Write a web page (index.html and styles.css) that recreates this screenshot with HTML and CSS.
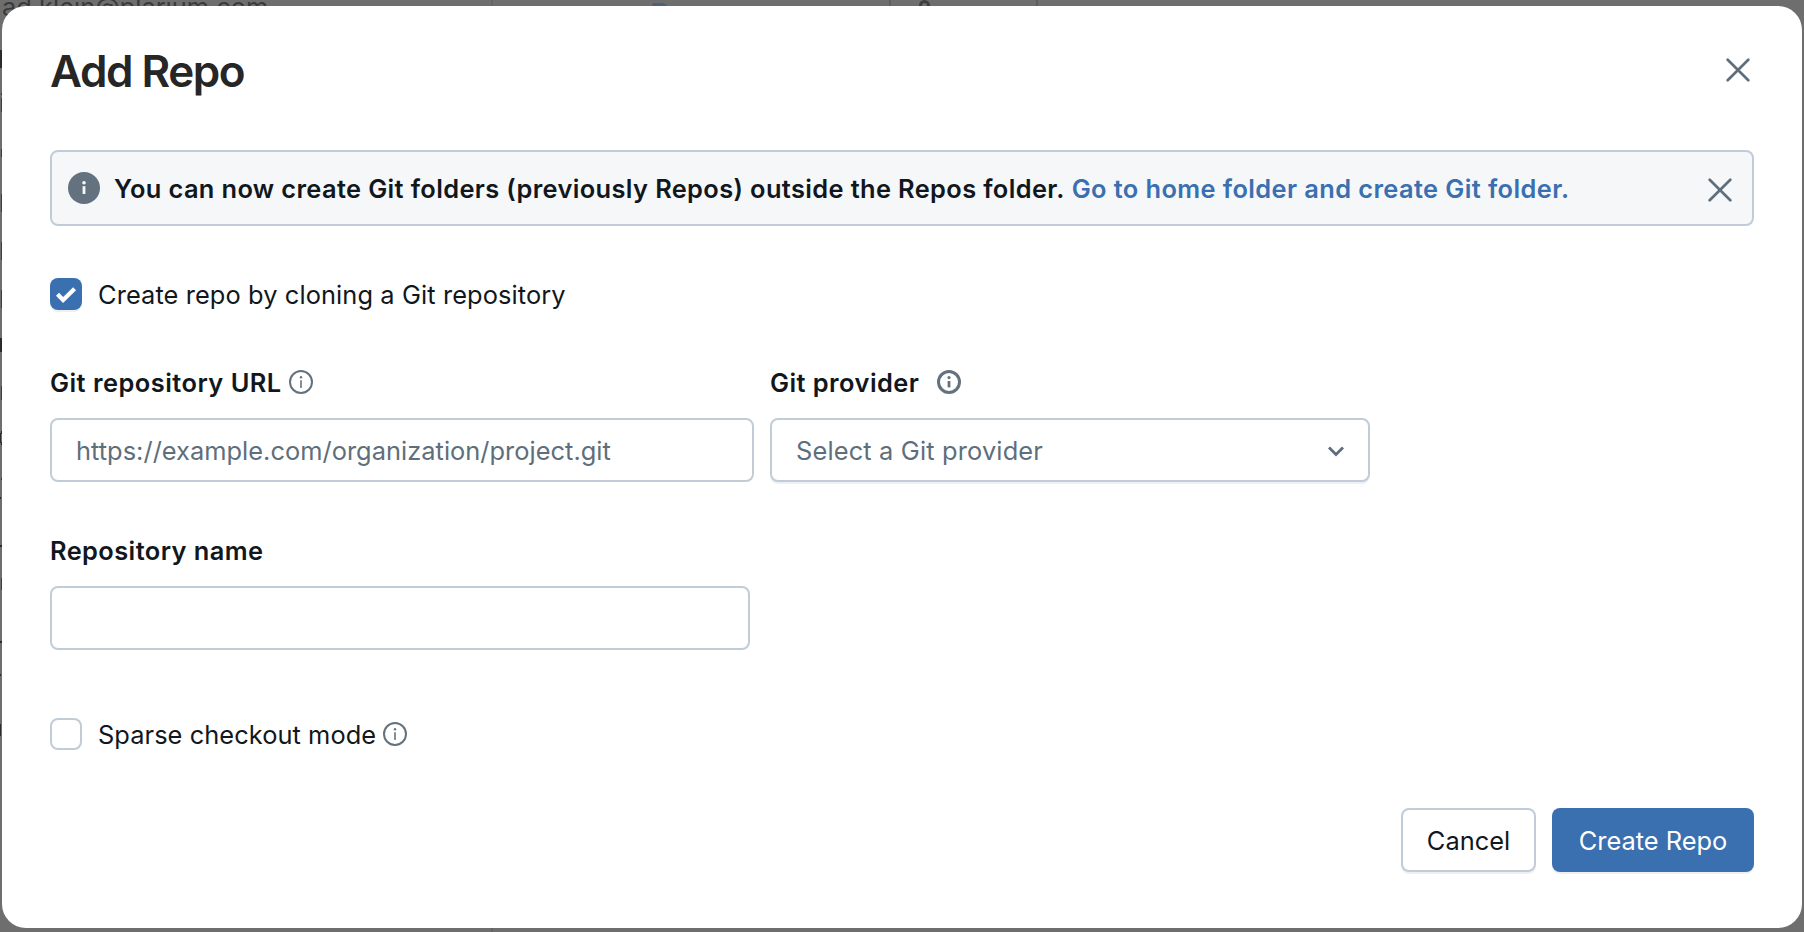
FILE: index.html
```html
<!DOCTYPE html>
<html lang="en">
<head>
<meta charset="utf-8">
<title>Add Repo</title>
<link rel="stylesheet" href="styles.css">
</head>
<body>
<div class="backdrop" aria-hidden="true">
  <span class="bg-user">ad.klein@plarium.com</span>
  <span class="bg-divider"></span>
  <span class="bg-folder"></span>
  <span class="bg-pill"></span>
  <span class="bg-lock"></span>
  <svg class="bg-edge" width="2" height="932" viewBox="0 0 2 932">
    <path fill="#2b2b2b" d="M0 50h2v18h-2zM0 338h2v14h-2zM0 545h2v2h-2zM0 641h2v2h-2zM0 674h1v2h-1zM0 497h1v2h-1zM0 724h1v12h-1zM0 433h1v-2h1v3h-1v8h1v3h-1v-2h-1z"/>
    <path fill="#3d3d3d" d="M1 93h1v2h-1zM1 98h1v14h-1zM1 149h1v8h-1zM1 194h1v18h-1zM1 242h1v18h-1zM1 290h1v18h-1zM1 386h1v14h-1zM1 478h1v2h-1zM1 578h1v12h-1z"/>
  </svg>
</div>
<main class="modal" role="dialog" aria-labelledby="title">
  <header class="modal-header">
    <h1 class="title" id="title"><span class="t-title">Add Repo</span></h1>
    <button class="close" aria-label="Close"><svg width="24" height="24" viewBox="0 0 24 24"><path d="M1.7 1.7l20.6 20.6M22.3 1.7L1.7 22.3"/></svg></button>
  </header>
  <section class="banner">
    <svg class="banner-icon" width="32" height="32" viewBox="0 0 32 32"><circle cx="16" cy="16" r="16" fill="#64727f"/><circle cx="16" cy="10.8" r="1.8" fill="#f6f7f9"/><path fill="#f6f7f9" d="M14.6 14.2h2.8v7.8h-2.8z"/></svg>
    <p class="banner-text"><span class="t-banner">You can now create Git folders (previously Repos) outside the Repos folder.</span><a class="link t-link">Go to home folder and create Git folder.</a></p>
    <button class="close" aria-label="Dismiss"><svg width="24" height="24" viewBox="0 0 24 24"><path d="M1.7 1.7l20.6 20.6M22.3 1.7L1.7 22.3"/></svg></button>
  </section>
  <label class="check-row">
    <span class="checkbox checked"><svg width="32" height="32" viewBox="0 0 32 32"><path d="M7.5 16.2l5.6 5.8L24.6 10.8" fill="none" stroke="#fff" stroke-width="4.2"/></svg></span>
    <span class="text t-clone">Create repo by cloning a Git repository</span>
  </label>
  <div class="fields">
    <div class="field field-url">
      <div class="label"><span class="text t-url">Git repository URL</span><svg class="info" width="24" height="24" viewBox="0 0 24 24"><circle cx="12" cy="12" r="11" fill="none" stroke="#64727f" stroke-width="2"/><circle cx="12" cy="7.2" r="1.2"/><path d="M11.2 10.2h1.6v7.8h-1.6z"/></svg></div>
      <div class="input"><span class="text t-placeholder">https://example.com/organization/project.git</span></div>
    </div>
    <div class="field field-provider">
      <div class="label"><span class="text t-provider">Git provider</span><svg class="info wide" width="24" height="24" viewBox="0 0 24 24"><circle cx="12" cy="12" r="10.5" fill="none" stroke="#64727f" stroke-width="3"/><circle cx="12" cy="7.6" r="1.6"/><path d="M10.6 11h2.8v6.4h-2.8z"/></svg></div>
      <div class="input select"><span class="text t-select">Select a Git provider</span><svg class="chevron" width="18" height="12" viewBox="0 0 18 12"><path d="M2 2.4l7 7 7-7" fill="none" stroke="#5f6e7b" stroke-width="2.8"/></svg></div>
    </div>
  </div>
  <div class="field field-name">
    <div class="label"><span class="text t-name">Repository name</span></div>
    <div class="input"></div>
  </div>
  <label class="check-row sparse">
    <span class="checkbox"></span>
    <span class="text t-sparse">Sparse checkout mode</span>
    <svg class="info" width="24" height="24" viewBox="0 0 24 24"><circle cx="12" cy="12" r="11" fill="none" stroke="#64727f" stroke-width="2"/><circle cx="12" cy="7.2" r="1.2"/><path d="M11.2 10.2h1.6v7.8h-1.6z"/></svg>
  </label>
  <footer class="actions">
    <button class="btn btn-cancel"><span class="text t-cancel">Cancel</span></button>
    <button class="btn btn-create"><span class="text t-create">Create Repo</span></button>
  </footer>
</main>
</body>
</html>
```
FILE: styles.css
```css
* { box-sizing: border-box; }

body {
  margin: 0;
  width: 1804px;
  height: 932px;
  overflow: hidden;
  padding: 6px 2px 4px;
  background: #6e6e6e;
  color: #11171c;
  font: 400 25.4px/32px Inter, "Liberation Sans", sans-serif;
}

span, a { white-space: nowrap; }
.text { padding-top: 2px; }

.backdrop { position: absolute; inset: 0; overflow: hidden; background: #6e6e6e; }
.bg-user { position: absolute; left: 2px; top: -9px; font-size: 25.4px; line-height: 32px; color: #3a3a3a; }
.bg-divider { position: absolute; left: 491px; top: 0; width: 2px; height: 932px; background: #656565; }
.bg-folder { position: absolute; left: 652px; top: 3px; width: 16px; height: 10px; border-radius: 2px 6px 0 0; background: #4d6078; }
.bg-pill { position: absolute; left: 889px; top: -40px; width: 149px; height: 52px; border: 2px solid #5c5e61; border-radius: 8px; }
.bg-lock { position: absolute; left: 919px; top: 0; width: 11px; height: 14px; border: 3px solid #3b3f43; border-radius: 6px 6px 0 0; }
.bg-edge { position: absolute; left: 0; top: 0; }

.modal {
  position: relative;
  height: 922px;
  padding: 38px 48px 56px;
  display: flex;
  flex-direction: column;
  background: #fff;
  border-radius: 24px;
}

.modal-header { display: flex; justify-content: space-between; height: 106px; padding-right: 4px; }
.title { margin: 0; font-size: 44px; line-height: 54px; font-weight: 600; color: #262626; }
.close { display: flex; align-items: center; justify-content: center; width: 24px; height: 52px; padding: 0; border: 0; background: none; }
.close path { fill: none; stroke: #5f6e7b; stroke-width: 2.7; stroke-linecap: round; }

.banner {
  display: flex;
  align-items: center;
  height: 76px;
  padding: 0 20px 0 16px;
  border: 2px solid #c0cdd8;
  border-radius: 8px;
  background: #f6f7f9;
  font-weight: 600;
}
.banner-icon { margin-right: 14px; }
.banner-text { margin: 0; padding-top: 2px; flex: 1; display: flex; gap: 7px; }
.banner .close { height: 28px; margin-top: 4px; }
.link { color: #3a6fb0; }

.check-row { display: flex; align-items: center; height: 32px; margin-top: 52px; }
.checkbox { width: 32px; height: 32px; margin-right: 16px; border: 2px solid #c0cdd8; border-radius: 8px; }
.checkbox.checked { border: 0; background: #3a6fb0; box-shadow: 0 2px 0 #f0f0f2; }
.checkbox svg { display: block; }

.fields { display: flex; gap: 16px; margin-top: 56px; }
.field-url { width: 704px; }
.field-provider { width: 600px; }
.field-name { width: 700px; margin-top: 52px; }
.label { display: flex; align-items: center; height: 32px; font-weight: 600; margin-bottom: 20px; }
.info { margin-left: 7px; margin-top: -1px; fill: #64727f; }
.info.wide { margin-left: 18px; }
.input {
  display: flex;
  align-items: center;
  height: 64px;
  padding: 0 23px 0 24px;
  border: 2px solid #c0cdd8;
  border-radius: 8px;
  background: #fff;
  color: #5f6e7b;
}
.select { justify-content: space-between; box-shadow: 0 2px 0 #f0f0f2; }
.chevron { margin-top: 1px; }
.sparse { margin-top: 68px; }

.actions { display: flex; justify-content: flex-end; gap: 16px; margin-top: 58px; }
.btn {
  display: flex;
  align-items: center;
  justify-content: center;
  height: 64px;
  padding: 0;
  border-radius: 8px;
  font: inherit;
  box-shadow: 0 2px 0 #f0f0f2;
}
.btn-cancel { width: 135px; border: 2px solid #c0cdd8; background: #fff; color: #11171c; }
.btn-create { width: 202px; border: 0; background: #3a6fb0; color: #fff; }

.t-title { letter-spacing: -1.45px; }
.t-banner { letter-spacing: 0.37px; }
.t-link { letter-spacing: 0.4px; }
.t-url { letter-spacing: 0.48px; }
.t-provider { letter-spacing: 0.45px; }
.t-name { letter-spacing: 0.42px; }
.t-clone { letter-spacing: 0.1px; }
.t-placeholder { letter-spacing: 0.03px; }
.t-select { letter-spacing: 0.16px; }
.t-sparse { letter-spacing: 0.06px; }
```
